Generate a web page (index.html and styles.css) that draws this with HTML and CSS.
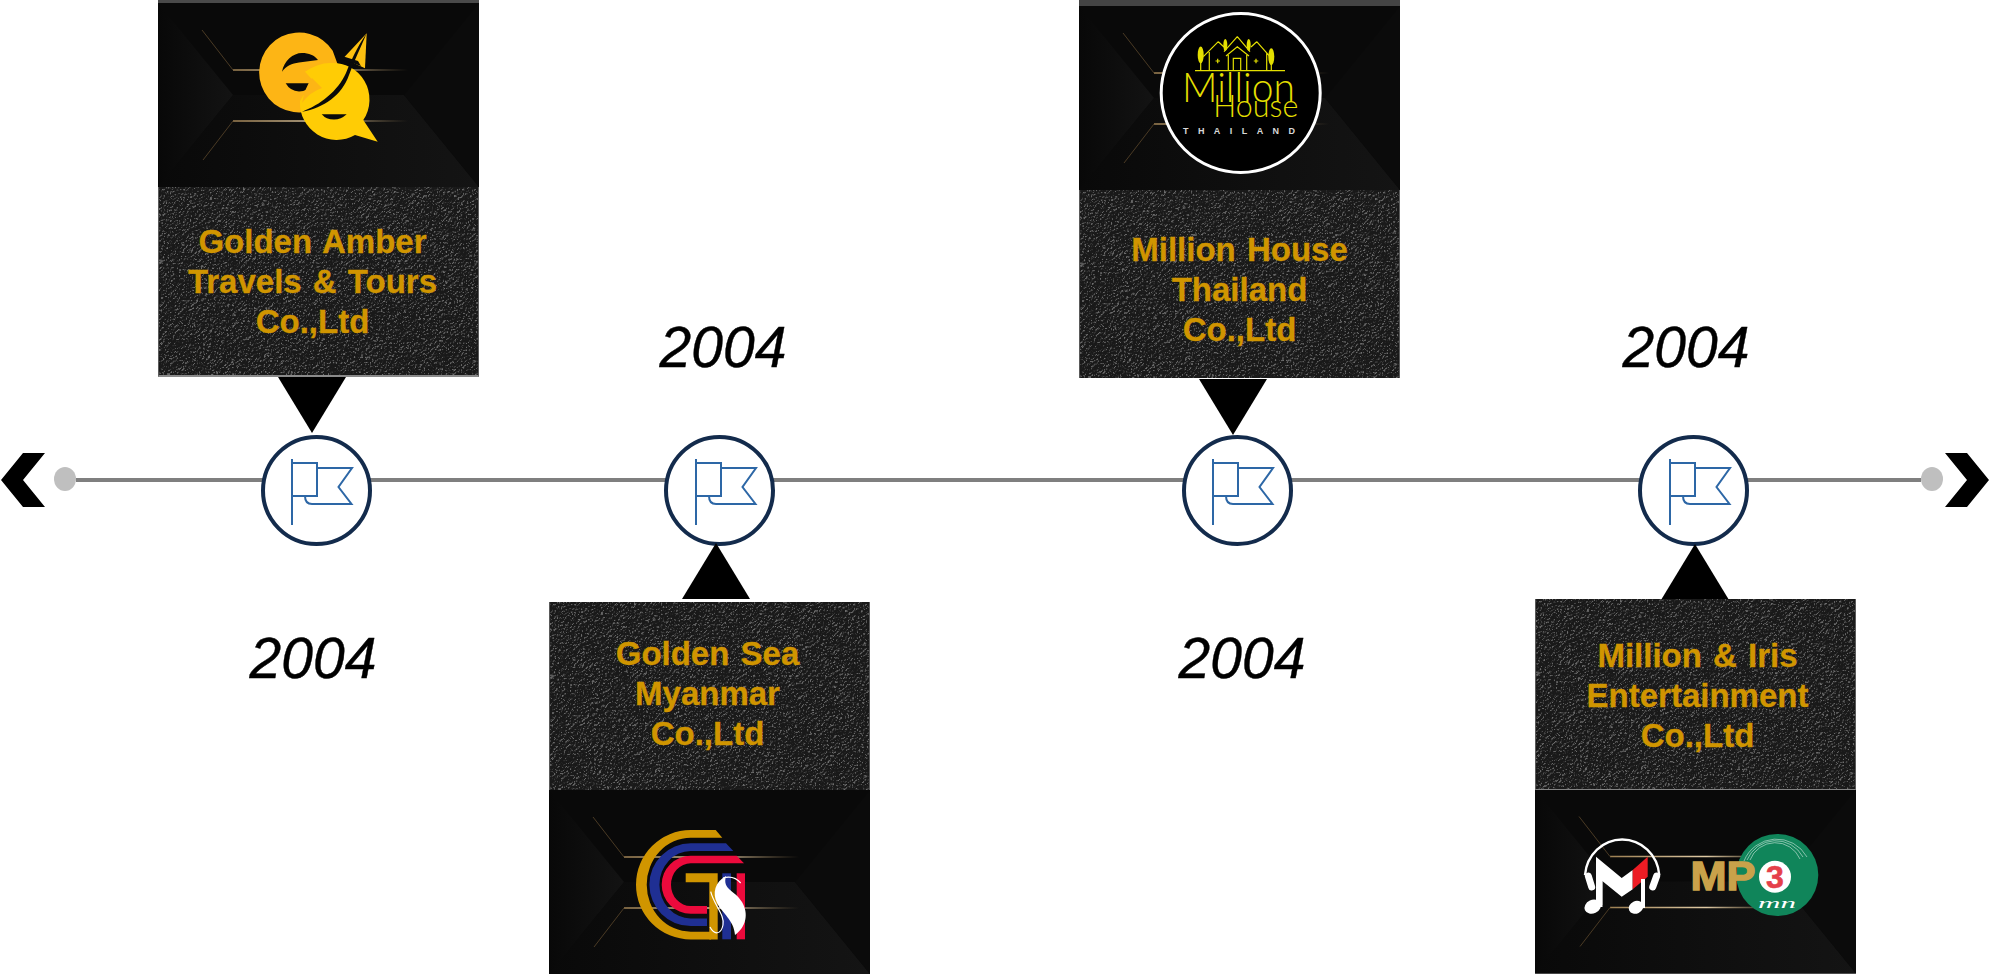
FILE: index.html
```html
<!DOCTYPE html>
<html lang="en">
<head>
  <meta charset="UTF-8" />
  <title>Company timeline</title>
  <link rel="stylesheet" href="styles.css">
</head>
<body>
  <!-- shared shapes -->
  <svg class="defs" xmlns="http://www.w3.org/2000/svg">
    <defs>
      <filter id="grain" x="0" y="0" width="100%" height="100%" color-interpolation-filters="sRGB">
        <feTurbulence type="fractalNoise" baseFrequency="0.55" numOctaves="2" seed="7" result="noise" />
        <feSpecularLighting in="noise" surfaceScale="2.8" specularConstant="0.8" specularExponent="30" lighting-color="#ffffff" result="spec">
          <feDistantLight azimuth="235" elevation="48" />
        </feSpecularLighting>
        <feComposite in="spec" in2="SourceGraphic" operator="arithmetic" k1="0" k2="0.42" k3="1" k4="0" />
      </filter>
      <linearGradient id="left-facet" x1="0" x2="1" y1="0" y2="0">
        <stop offset="0" stop-color="#080808" />
        <stop offset="1" stop-color="#131313" />
      </linearGradient>
      <linearGradient id="low-facet" x1="0" x2="1" y1="0" y2="0">
        <stop offset="0" stop-color="#090909" />
        <stop offset="0.45" stop-color="#0e0e0e" />
        <stop offset="1" stop-color="#141414" />
      </linearGradient>
      <linearGradient id="wire" gradientUnits="userSpaceOnUse" x1="75" x2="250" y1="0" y2="0">
        <stop offset="0" stop-color="#9c7f52" />
        <stop offset="0.55" stop-color="#e0cba6" />
        <stop offset="1" stop-color="#a88a5c" stop-opacity="0" />
      </linearGradient>
      <symbol id="facets" viewBox="0 0 321 184">
        <rect width="321" height="184" fill="#090909" />
        <polygon points="0,0 75,92 0,184" fill="url(#left-facet)" />
        <polygon points="75,92 246,92 321,184 0,184" fill="url(#low-facet)" />
        <polygon points="246,92 321,0 321,184" fill="#0b0b0b" />
        <path d="M75 67 H250 M75 118 H250" stroke="url(#wire)" stroke-width="1.4" fill="none" />
        <path d="M44 27 L75 67 M45 157 L75 118" stroke="#4a3a24" stroke-width="1" fill="none" />
      </symbol>
      <symbol id="flag" viewBox="0 0 104 104">
        <path d="M28 20 V86 M28 24 H53 V57 H28 M53 29 H88 L74.5 48 L87.5 65 H48 Q41 65 41 57" fill="none" stroke="#2d67a6" stroke-width="2" />
      </symbol>
    </defs>
  </svg>

  <div class="timeline">
    <div class="track">
      <span class="chevron chevron-left"></span>
      <span class="dot dot-left"></span>
      <span class="rule"></span>
      <span class="dot dot-right"></span>
      <span class="chevron chevron-right"></span>
    </div>

    <div class="stop stop-1"><svg class="flag"><use href="#flag" /></svg></div>
    <div class="stop stop-2"><svg class="flag"><use href="#flag" /></svg></div>
    <div class="stop stop-3"><svg class="flag"><use href="#flag" /></svg></div>
    <div class="stop stop-4"><svg class="flag"><use href="#flag" /></svg></div>

    <div class="year year-1">2004</div>
    <div class="year year-2">2004</div>
    <div class="year year-3">2004</div>
    <div class="year year-4">2004</div>

    <span class="pointer pointer-down pointer-1"></span>
    <span class="pointer pointer-up pointer-2"></span>
    <span class="pointer pointer-down pointer-3"></span>
    <span class="pointer pointer-up pointer-4"></span>

    <!-- Golden Amber -->
    <div class="card card-1">
      <svg class="card-logo" viewBox="0 0 321 184">
        <use href="#facets" width="321" height="184" />
        <path d="M174.7 47.7 A40 40 0 1 0 150 108.5 L185 76 Z" fill="#fdb515" />
        <path d="M124 68.7 C126 58 135 50 144 50 C151 50 156 52 160 57 L141 59.5 C134 60.5 128 63 124 68.7 Z" fill="#0a0a0a" />
        <path d="M127.7 80.3 H155.3 Q150 88.5 141 88.5 Q132 88 127.7 80.3 Z" fill="#0a0a0a" />
        <path d="M208.7 30.3 L185.3 55.3 L207 65.3 Z" fill="#fdc010" />
        <path d="M147 68.7 Q160 60 172 60 A36.7 36.7 0 0 1 205.3 117 L219.7 138.7 L197 132 A36.7 36.7 0 0 1 142 98 Q146 88 160 83 Z" fill="#ffcc05" />
        <path d="M154 75 L164 85 Q152 89 144 100 Q147 84 154 75 Z" fill="#fdb515" />
        <path d="M163.7 111.3 H188.7 Q183 116.5 176 116.5 Q168 116.5 163.7 111.3 Z" fill="#0a0a0a" />
        <path d="M208.7 30.3 C199 44 193 58 188 70 C180 88 162 102 144 108.7 C166 105 184 92 191 72 C196 58 203 44 208.7 30.3 Z" fill="#0a0a0a" />
        <path d="M180 55 L203 63 L200 58 L184 53 Z" fill="#0a0a0a" />
      </svg>
      <div class="card-name name-1"><p>Golden Amber<br>Travels &amp; Tours<br>Co.,Ltd</p></div>
    </div>

    <!-- Golden Sea -->
    <div class="card card-2">
      <div class="card-name name-2"><p>Golden Sea<br>Myanmar<br>Co.,Ltd</p></div>
      <svg class="card-logo" viewBox="0 0 321 184">
        <use href="#facets" width="321" height="184" />
        <path d="M141.7 40 H166.7 L173.3 47.7 H141.7 A44 47 0 0 0 141.7 141.7 H162 V149.4 H141.7 A54.7 54.7 0 0 1 141.7 40 Z" fill="#d09500" />
        <path d="M141.7 53.3 H177 L184.3 61 H141.7 A31.3 33.7 0 0 0 141.7 128.4 H158 V136.1 H141.7 A41.3 41.4 0 0 1 141.7 53.3 Z" fill="#1f2f93" />
        <path d="M141.7 65.7 H187.7 L195 73.3 H141.7 A19.7 21.4 0 0 0 141.7 116.1 H158 V123.7 H141.7 A29 29 0 0 1 141.7 65.7 Z" fill="#ec0a3c" />
        <path d="M136.7 83.3 H168.7 V149.4 H160.3 V92.3 H136.7 Z" fill="#d09500" />
        <rect x="173.3" y="83.3" width="8.7" height="66" fill="#1f2f93" />
        <rect x="187.7" y="83.3" width="8.3" height="66" fill="#ec0a3c" />
        <path d="M177 86 C166 92 163 103 168 113 C173 123 185 130 186 145 C197 137 200 124 193 112 C186 100 173 100 177 86 Z" fill="#ffffff" />
        <path d="M174 88 Q185 85 191.7 93 M161.7 101.7 C165 115 176 125 174 135 C172 145 165 145 161 137" fill="none" stroke="#ffffff" stroke-width="1.2" />
      </svg>
    </div>

    <!-- Million House -->
    <div class="card card-3">
      <svg class="card-logo" viewBox="0 0 321 184">
        <use href="#facets" width="321" height="184" />
        <circle cx="161.7" cy="87" r="79.5" fill="#000000" stroke="#ffffff" stroke-width="3" />
        <g fill="#e4df00">
          <ellipse cx="121.7" cy="49" rx="3" ry="8.5" />
          <ellipse cx="192.3" cy="50.7" rx="3" ry="8.5" />
          <ellipse cx="146.3" cy="39" rx="2" ry="6" />
          <ellipse cx="169.7" cy="39" rx="2" ry="6" />
        </g>
        <path d="M121.7 49 V64.7 M192.3 50.7 V64.7 M116 64.7 H206 M158.3 30.7 L145 45.7 M158.3 30.7 L171 45.7 M147 50 L158.3 40.7 L170 50 M149.3 49 V64 M167.7 49 V64 M154.3 64 V52.3 H161.7 V64 M139.3 35.7 L124.3 50.7 M139.3 35.7 L145 41 M130.3 46 V64 M177.7 35.7 L191 50.7 M177.7 35.7 L172 41 M187.7 47 V64 M136.5 55 H141 M138.7 52.8 V57.2 M174.8 55 H179.3 M177 52.8 V57.2" fill="none" stroke="#e4df00" stroke-width="1.2" />
        <text class="mh-word" x="103" y="95.7" font-size="41" textLength="113" lengthAdjust="spacingAndGlyphs">Million</text>
        <text class="mh-word" x="134.3" y="111" font-size="32" textLength="85" lengthAdjust="spacingAndGlyphs">House</text>
        <text class="mh-place" x="104" y="128.3" font-size="9" textLength="112">THAILAND</text>
      </svg>
      <div class="card-name name-3"><p>Million House<br>Thailand<br>Co.,Ltd</p></div>
    </div>

    <!-- Million & Iris -->
    <div class="card card-4">
      <div class="card-name name-4"><p>Million &amp; Iris<br>Entertainment<br>Co.,Ltd</p></div>
      <svg class="card-logo card-logo-tall" viewBox="0 0 321 185">
        <use href="#facets" width="321" height="185" />
        <path d="M50 86 A37.3 39 0 0 1 124.3 86" fill="none" stroke="#ffffff" stroke-width="2.4" />
        <path d="M53.3 87 L56.7 98 M121.7 87 L117.7 98" fill="none" stroke="#ffffff" stroke-width="7" stroke-linecap="round" />
        <path d="M61 67.7 L86.7 89 L97.7 81 V100.3 L86.7 107.7 L67.3 92 V116 H61 Z" fill="#ffffff" />
        <polygon points="97.7,81 112.7,67.7 112.7,87.7 97.7,100.3" fill="#ec1c24" />
        <ellipse cx="57.7" cy="117.7" rx="8.5" ry="6.8" transform="rotate(-25 57.7 117.7)" fill="#ffffff" />
        <rect x="63" y="92" width="4.5" height="26" fill="#ffffff" />
        <ellipse cx="101" cy="118.3" rx="7.5" ry="6.2" transform="rotate(-25 101 118.3)" fill="#ffffff" />
        <rect x="106" y="90" width="4" height="29" fill="#ffffff" />
        <circle cx="242.3" cy="86" r="41" fill="#10855a" />
        <path d="M209 72 A35 35 0 0 1 272 68 M212 71 A31 31 0 0 1 268 68 M215 71 A27 27 0 0 1 265 70" fill="none" stroke="#ffffff" stroke-opacity="0.55" stroke-width="0.9" />
        <text class="mp-word" x="155.5" y="100.5" font-size="41" textLength="65" lengthAdjust="spacingAndGlyphs">MP</text>
        <circle cx="240" cy="87.7" r="16" fill="#ffffff" />
        <text class="mp-three" x="240" y="99" font-size="32">3</text>
        <text class="mp-tag" x="223" y="119" font-size="15" textLength="38" lengthAdjust="spacingAndGlyphs">mn</text>
      </svg>
    </div>
  </div>
</body>
</html>
```

FILE: styles.css
```css
* {
  margin: 0;
  padding: 0;
  box-sizing: border-box;
}

html, body {
  background: #ffffff;
}

.defs {
  position: absolute;
  width: 0;
  height: 0;
}

/* free canvas: everything on it hangs off the timeline */
.timeline {
  position: relative;
  width: 1989px;
  height: 974px;
  overflow: hidden;
  font-family: "Liberation Sans", Arial, sans-serif;
}

/* Track */
.track {
  position: absolute;
  left: 0;
  top: 453px;
  width: 100%;
  height: 54px;
  display: flex;
  align-items: center;
}

.rule {
  flex: 1;
  height: 4px;
  background: #7f7f7f;
}

.dot {
  width: 22px;
  height: 24px;
  margin-top: -2px;
  border-radius: 50%;
  background: #bfbfbf;
}

.dot-left {
  margin-left: 9px;
}

.dot-right {
  margin-right: 2px;
}

.chevron {
  width: 44px;
  height: 54px;
  background: #000000;
}

.chevron-left {
  margin-left: 1px;
  clip-path: polygon(50% 0, 100% 0, 50% 50%, 100% 100%, 50% 100%, 0 50%);
}

.chevron-right {
  clip-path: polygon(0 0, 50% 0, 100% 50%, 50% 100%, 0 100%, 50% 50%);
}

/* Stops on the line */
.stop {
  position: absolute;
  top: 435px;
  width: 111px;
  height: 111px;
  display: flex;
  align-items: center;
  justify-content: center;
  background: #ffffff;
  border: 4px solid #132b4c;
  border-radius: 50%;
}

.stop-1 { left: 260.5px; }
.stop-2 { left: 664px; }
.stop-3 { left: 1181.5px; }
.stop-4 { left: 1638px; }

.flag {
  width: 104px;
  height: 104px;
  flex-shrink: 0;
}

/* Years */
.year {
  position: absolute;
  width: 200px;
  font-size: 57px;
  line-height: 64px;
  font-style: italic;
  text-align: center;
  color: #000000;
  -webkit-text-stroke: 0.4px #000000;
}

.year-1 { left: 213px; top: 626px; }
.year-2 { left: 623px; top: 315px; }
.year-3 { left: 1142px; top: 626px; }
.year-4 { left: 1586px; top: 315px; }

/* Triangles between a card and its stop */
.pointer {
  position: absolute;
  width: 68px;
  height: 56px;
  background: #000000;
}

.pointer-down {
  clip-path: polygon(0 0, 100% 0, 50% 100%);
}

.pointer-up {
  clip-path: polygon(50% 0, 100% 100%, 0 100%);
}

.pointer-1 { left: 278px; top: 377px; }
.pointer-2 { left: 682px; top: 543px; }
.pointer-3 { left: 1199px; top: 379px; }
.pointer-4 { left: 1661px; top: 544px; }

/* Cards */
.card {
  position: absolute;
  width: 321px;
  display: flex;
  flex-direction: column;
}

.card-1 { left: 158px; top: 0; height: 377px; border-top: 3px solid #4a4a4a; }
.card-2 { left: 549px; top: 602px; height: 372px; }
.card-3 { left: 1079px; top: 0; height: 378px; border-top: 6px solid #444444; }
.card-4 { left: 1535px; top: 599px; height: 375px; }

.card-logo {
  display: block;
  width: 321px;
  height: 184px;
  flex-shrink: 0;
}

.card-logo-tall {
  height: 185px;
}

.card-name {
  position: relative;
  flex: 1;
  display: flex;
  align-items: center;
  justify-content: center;
  font-size: 33px;
  font-weight: 700;
  line-height: 40px;
  word-spacing: 2px;
  text-align: center;
  color: #d09500;
  -webkit-text-stroke: 0.3px #d09500;
  border-left: 1px solid #5a5a5a;
  border-right: 1px solid #5a5a5a;
}

.card-name::before {
  content: "";
  position: absolute;
  inset: 0;
  background: #191919;
  filter: url(#grain);
}

.card-name p {
  position: relative;
}

.name-1 { padding-right: 12px; padding-top: 2px; border-bottom: 2px solid #8a8a8a; }
.name-2 { padding-right: 4px; padding-bottom: 4px; }
.name-3 { padding-top: 12px; }
.name-4 { padding-left: 4px; padding-top: 4px; }

/* Lettering inside the logos */
.mh-word {
  font-family: Lato, "Liberation Sans", sans-serif;
  font-weight: 300;
  fill: #e4df00;
}

.mh-place {
  font-family: "Liberation Sans", sans-serif;
  font-weight: 700;
  fill: #d8d8d8;
}

.mp-word {
  font-family: "Liberation Sans", sans-serif;
  font-weight: 700;
  fill: #c9a24a;
  stroke: #c9a24a;
  stroke-width: 1.4px;
}

.mp-three {
  font-family: "Liberation Sans", sans-serif;
  font-weight: 700;
  text-anchor: middle;
  fill: #e5404a;
  stroke: #e5404a;
  stroke-width: 0.6px;
}

.mp-tag {
  font-family: "Liberation Serif", serif;
  font-style: italic;
  fill: #ffffff;
}
```
